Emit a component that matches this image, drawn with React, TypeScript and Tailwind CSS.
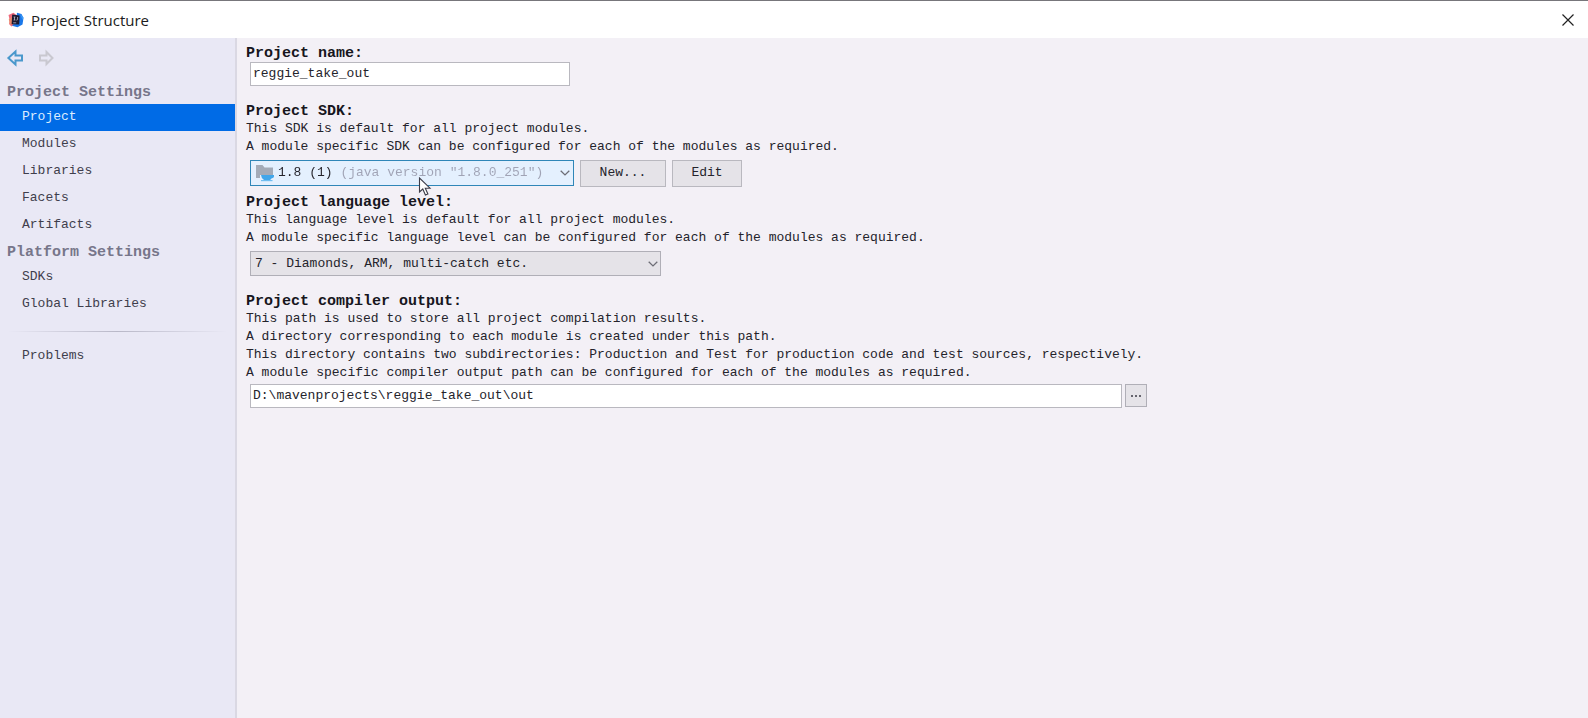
import { useState } from "react";
import type { ReactNode } from "react";

const projectItems = ["Project", "Modules", "Libraries", "Facets", "Artifacts"];
const platformItems = ["SDKs", "Global Libraries"];

function AppLogo() {
  return (
    <svg width="16" height="16" viewBox="0 0 16 16" aria-hidden="true">
      <path d="M.5 3 5.500 .8 9 3.500 7 12 3.500 14.500 1 12 2 9Z" fill="#ef6a7e" />
      <path d="M.8 7 4 5v8l-2.500-1.500Z" fill="#e98a6c" />
      <path d="M9 .8 13.500 2 15.500 6 14.500 12.500 9.500 15.200 4 13.800 8 10Z" fill="#1a78ea" />
      <path d="M12 2 15.500 5.500 14.500 8Z" fill="#3f9cf5" />
      <path d="M4.200 2.600 11.600 3.400 11.200 12.600 3.600 12.200Z" fill="#1c1a30" />
      <path d="M5.600 5h1.800M6.500 5v3M5.600 8h1.800M9.600 5v2.400q0 .8-1.300.7M5.200 10.800h3" stroke="#b9b9cc" strokeWidth=".8" fill="none" />
    </svg>
  );
}

function ArrowIcon({ forward = false }: { forward?: boolean }) {
  return (
    <svg width="18" height="18" viewBox="0 0 18 18" aria-hidden="true" fill="none" strokeWidth="2">
      {forward ? (
        <path d="M2 6.600h6.500V3l6 6-6 6v-3.600H2Z" stroke="#c9c8d0" />
      ) : (
        <path d="M16 6.600H9.500V2.600L2.400 9l7.100 6.400v-4H16Z" stroke="#4a98cc" />
      )}
    </svg>
  );
}

function Chevron() {
  return (
    <svg
      className="pointer-events-none absolute top-1/2 right-[3px] -translate-y-1/2"
      width="10"
      height="6"
      viewBox="0 0 10 6"
      fill="none"
      aria-hidden="true"
    >
      <path d="m.7.7 4.300 4.200L9.300.7" stroke="#6d6d76" strokeWidth="1.300" />
    </svg>
  );
}

function SdkIcon() {
  return (
    <svg
      className="pointer-events-none absolute top-1/2 left-1 -translate-y-1/2"
      width="20"
      height="18"
      viewBox="0 0 20 18"
      aria-hidden="true"
    >
      <path d="M1 1h6.500l2 2.500H18V11H5v3H1Z" fill="#a3abb8" />
      <path d="M6 11h13v1.500q0 1.800-2.600 1.900-.6 1.100-1.600 1.600H9Q6.300 14.500 6 11Z" fill="#41a6ea" />
      <path d="M6 16h11.500v1.200H6Z" fill="#6fbdf0" />
    </svg>
  );
}

function Pointer() {
  return (
    <svg
      className="pointer-events-none absolute top-[16px] left-[167px] z-10"
      width="14"
      height="20"
      viewBox="0 0 14 20"
      aria-hidden="true"
    >
      <path d="M1.500 1v14l3.300-3 2.600 6 2.500-1.100-2.600-5.700H12Z" fill="#fff" stroke="#3c3c48" strokeWidth="1.100" />
    </svg>
  );
}

function NavGroup({
  title,
  items,
  active,
  onSelect,
}: {
  title: string;
  items: string[];
  active: string;
  onSelect: (item: string) => void;
}) {
  return (
    <section className="pt-[2px]">
      <h2 className="flex h-[23px] items-center pl-[7px] text-[15px] font-bold text-[#77768a]">{title}</h2>
      <ul>
        {items.map((item) => (
          <li key={item}>
            <NavItem label={item} active={active === item} onSelect={onSelect} />
          </li>
        ))}
      </ul>
    </section>
  );
}

function NavItem({ label, active, onSelect }: { label: string; active: boolean; onSelect: (item: string) => void }) {
  return (
    <button
      type="button"
      onClick={() => onSelect(label)}
      className={
        active
          ? "flex h-[27px] w-full items-center bg-[#006be6] pb-[2px] pl-[22px] text-[#dcecff]"
          : "flex h-[27px] w-full items-center pb-[2px] pl-[22px] text-[#3f3e4c]"
      }
    >
      {label}
    </button>
  );
}

function Heading({ children, htmlFor }: { children: ReactNode; htmlFor: string }) {
  return (
    <label htmlFor={htmlFor} className="block text-[15px] leading-4 font-bold text-[#17161d]">
      {children}
    </label>
  );
}

export default function App() {
  const [active, setActive] = useState("Project");
  const [name, setName] = useState("reggie_take_out");
  const [output, setOutput] = useState("D:\\mavenprojects\\reggie_take_out\\out");

  return (
    <div className="flex min-h-screen flex-col bg-[#f3f0f6] font-['Liberation_Mono',monospace] text-[13px] leading-[18px] text-[#24232b]">
      <header className="flex h-[38px] items-center border-t border-[#77767b] bg-white pr-[9px] pl-2">
        <AppLogo />
        <h1 className="ml-[7px] flex-1 font-['Open_Sans',sans-serif] text-[15px] text-[#1c1c20]">Project Structure</h1>
        <button type="button" aria-label="Close" className="p-1">
          <svg width="14" height="14" viewBox="0 0 14 14" fill="none" stroke="#222" strokeWidth="1.200" aria-hidden="true">
            <path d="m1.500 1.500 11 11M12.500 1.500l-11 11" />
          </svg>
        </button>
      </header>

      <div className="flex flex-1">
        <nav className="w-[237px] shrink-0 border-r-2 border-[#dad8e3] bg-[#e9e8f5]">
          <div className="flex h-[41px] items-center gap-[14px] pb-[2px] pl-[6px]">
            <button type="button" aria-label="Back">
              <ArrowIcon />
            </button>
            <button type="button" aria-label="Forward" disabled>
              <ArrowIcon forward />
            </button>
          </div>
          <NavGroup title="Project Settings" items={projectItems} active={active} onSelect={setActive} />
          <NavGroup title="Platform Settings" items={platformItems} active={active} onSelect={setActive} />
          <div className="mx-2 mt-[13px] mb-[11px] h-px bg-linear-to-r from-transparent via-[#b9b8c8] to-transparent" />
          <NavItem label="Problems" active={active === "Problems"} onSelect={setActive} />
        </nav>

        <main className="flex min-w-0 flex-1 flex-col gap-[18px] pt-2 pl-[9px]">
          <section>
            <Heading htmlFor="project-name">Project name:</Heading>
            <input
              id="project-name"
              value={name}
              onChange={(e) => setName(e.target.value)}
              className="ml-1 block h-6 w-80 border border-[#b9b8bf] bg-white px-[2px] pb-[2px] outline-none"
            />
          </section>

          <div className="flex flex-col gap-2">
            <section>
              <Heading htmlFor="project-sdk">Project SDK:</Heading>
              <p>This SDK is default for all project modules.</p>
              <p>A module specific SDK can be configured for each of the modules as required.</p>
              <div className="mt-1 ml-1 flex items-start gap-[6px]">
                <div className="relative border border-[#2f86b8] bg-[#e4f0fe]">
                  <SdkIcon />
                  <select
                    id="project-sdk"
                    className="block h-6 w-[322px] appearance-none bg-linear-to-r from-[#24232b] from-[84px] to-[#a0a3b5] to-[84px] bg-clip-text pl-[27px] text-transparent outline-none"
                  >
                    <option>1.8 (1) (java version "1.8.0_251")</option>
                  </select>
                  <Chevron />
                  <Pointer />
                </div>
                <button type="button" className="h-[27px] w-[86px] border border-[#b9b8bf] bg-[#e5e3e8] pb-[2px]">
                  New...
                </button>
                <button type="button" className="h-[27px] w-[70px] border border-[#b9b8bf] bg-[#e5e3e8] pb-[2px]">
                  Edit
                </button>
              </div>
            </section>

            <section>
              <Heading htmlFor="language-level">Project language level:</Heading>
              <p>This language level is default for all project modules.</p>
              <p>A module specific language level can be configured for each of the modules as required.</p>
              <div className="relative mt-1 ml-1 w-[411px]">
                <select
                  id="language-level"
                  className="block h-[25px] w-full appearance-none border border-[#b0afb7] bg-[#e5e3e8] pl-1 outline-none"
                >
                  <option>7 - Diamonds, ARM, multi-catch etc.</option>
                </select>
                <Chevron />
              </div>
            </section>
          </div>

          <section>
            <Heading htmlFor="compiler-output">Project compiler output:</Heading>
            <p>This path is used to store all project compilation results.</p>
            <p>A directory corresponding to each module is created under this path.</p>
            <p>
              This directory contains two subdirectories: Production and Test for production code and test sources,
              respectively.
            </p>
            <p>A module specific compiler output path can be configured for each of the modules as required.</p>
            <div className="mt-[2px] ml-1 flex gap-[3px]">
              <input
                id="compiler-output"
                value={output}
                onChange={(e) => setOutput(e.target.value)}
                className="h-6 w-full max-w-[872px] border border-[#b9b8bf] bg-white px-[2px] pb-[2px] outline-none"
              />
              <button
                type="button"
                aria-label="Browse"
                className="flex h-[23px] w-[22px] items-center justify-center border border-[#b0afb7] bg-[#e5e3e8]"
              >
                <svg width="10" height="2" viewBox="0 0 10 2" fill="#66656e" aria-hidden="true">
                  <path d="M0 0h2v2H0zM4 0h2v2H4zM8 0h2v2H8z" />
                </svg>
              </button>
            </div>
          </section>
        </main>
      </div>
    </div>
  );
}
